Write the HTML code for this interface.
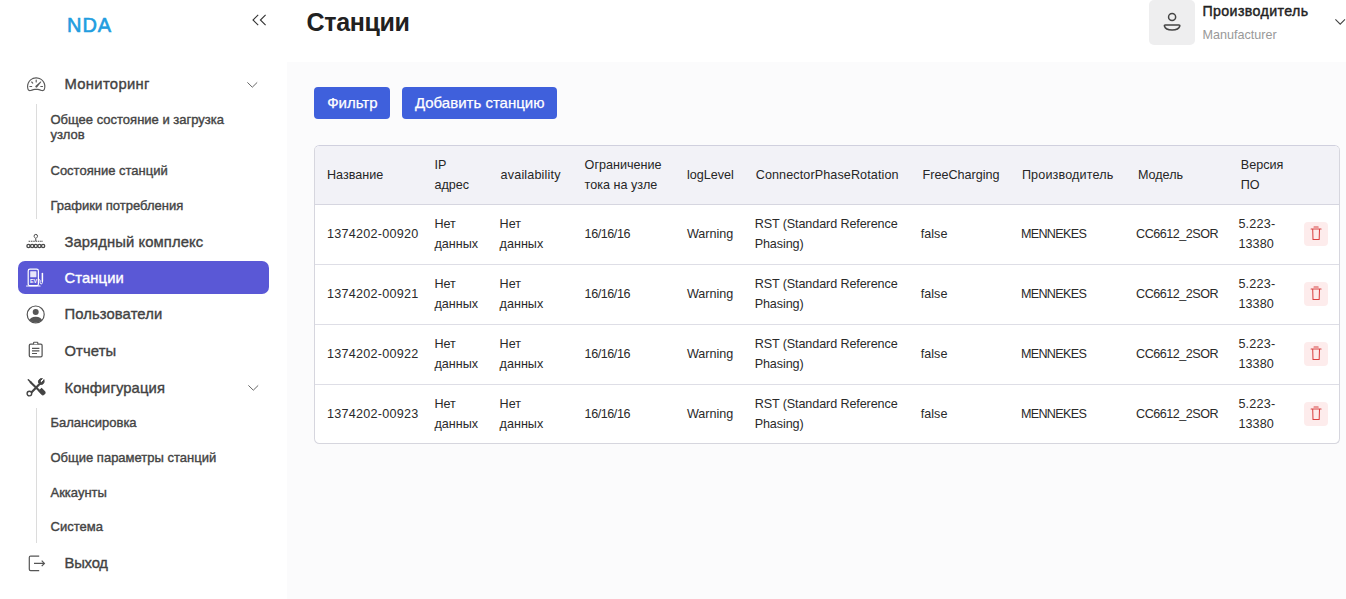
<!DOCTYPE html>
<html lang="ru"><head><meta charset="utf-8"><title>Станции</title>
<style>
*{box-sizing:border-box;margin:0;padding:0}
html,body{width:1346px;height:599px;overflow:hidden;background:#fff;font-family:"Liberation Sans","DejaVu Sans",sans-serif;color:#222}
.abs{position:absolute}
svg{position:absolute;overflow:visible}
#side{position:absolute;left:0;top:0;width:287px;height:599px;background:#fff}
#main{position:absolute;left:287px;top:62px;width:1059px;height:537px;background:#fbfbfc}
.logo{position:absolute;left:67px;top:13.3px;font-size:20px;line-height:24px;color:#229ddf;-webkit-text-stroke:.6px #229ddf;letter-spacing:.95px}
h1{position:absolute;left:306.5px;top:7.4px;letter-spacing:-.32px;font-size:25px;line-height:30px;font-weight:bold;color:#212121}
.mi{position:absolute;left:64.5px;font-size:14.8px;line-height:20px;color:#424242;-webkit-text-stroke:.36px #424242;letter-spacing:.1px;white-space:nowrap}
.sub{position:absolute;left:50.5px;font-size:13px;line-height:15.2px;color:#444;-webkit-text-stroke:.38px #444;width:200px}
.vline{position:absolute;left:36px;width:1px;background:#dcdcdc}
.active{position:absolute;left:18px;top:261px;width:250.5px;height:33px;background:#5a58d6;border-radius:7px}
.btn{position:absolute;top:87px;height:32px;background:#3f60dc;color:#fff;border-radius:4px;font-size:15px;line-height:32px;text-align:center;-webkit-text-stroke:.25px #fff}
.tw{position:absolute;left:314px;top:145px;width:1026px;height:299px;border:1px solid #d6d6de;border-top-color:#d0d0de;border-radius:5.500px;background:#fff;overflow:hidden}
table{width:1024px;table-layout:fixed;border-collapse:separate;border-spacing:0;font-size:12.6px}
th{background:#f2f2f7;font-weight:normal;text-align:left;height:59px;border-bottom:1px solid #d6d6e0;color:#262626;line-height:19.2px;padding:1px 0 0 12px;vertical-align:middle;white-space:nowrap}
td{height:60px;border-bottom:1px solid #dedee6;color:#2a2a2a;line-height:19.2px;padding:0 0 0 12px;vertical-align:middle}
tbody tr:last-child td{border-bottom-color:transparent}
td i,th i{font-style:normal;display:block;position:relative}
.sh0{left:-.6px}.sh1{left:-1px}.sh2{left:-1.8px}.sh3{left:-2.4px}
td.dc{padding:0 0 0 11.5px}
.del{display:block;width:24px;height:24px;background:#fdecec;border-radius:4px;position:relative;top:-1px;left:.3px}
.user{position:absolute;left:1149px;top:0;width:45.5px;height:45px;background:#eeeeef;border-radius:5px}
</style></head><body>
<div id="side">
<div class="logo">NDA</div>
<div class="mi" style="top:74.4px;letter-spacing:.32px">Мониторинг</div>
<div class="vline" style="top:104px;height:115px"></div>
<div class="sub" style="top:112.2px">Общее состояние и загрузка узлов</div>
<div class="sub" style="top:162.9px">Состояние станций</div>
<div class="sub" style="top:197.6px">Графики потребления</div>
<div class="mi" style="top:232px">Зарядный комплекс</div>
<div class="active"></div>
<div class="mi" style="top:267.8px;color:#fff;-webkit-text-stroke-color:#fff">Станции</div>
<div class="mi" style="top:304.3px">Пользователи</div>
<div class="mi" style="top:340.8px">Отчеты</div>
<div class="mi" style="top:377.9px">Конфигурация</div>
<div class="vline" style="top:408px;height:135px"></div>
<div class="sub" style="top:415.1px">Балансировка</div>
<div class="sub" style="top:450px">Общие параметры станций</div>
<div class="sub" style="top:484.5px">Аккаунты</div>
<div class="sub" style="top:519.1px">Система</div>
<div class="mi" style="top:552.5px;letter-spacing:-.2px">Выход</div>
</div>
<h1>Станции</h1>
<div class="user"></div>
<div class="abs" style="left:1202.5px;top:2px;font-size:14.200px;line-height:18px;letter-spacing:.38px;-webkit-text-stroke:.42px #222;color:#222">Производитель</div>
<div class="abs" style="left:1202.5px;top:26.6px;font-size:12.6px;line-height:16px;color:#999">Manufacturer</div>
<div id="main"></div>
<div class="btn" style="left:314.4px;width:76px">Фильтр</div>
<div class="btn" style="left:402.3px;width:154.8px">Добавить станцию</div>
<div class="tw"><table><colgroup><col style="width:108px"><col style="width:65.6px"><col style="width:84px"><col style="width:102.3px"><col style="width:68.8px"><col style="width:166.9px"><col style="width:99.3px"><col style="width:116px"><col style="width:102.9px"><col style="width:63.7px"><col></colgroup><thead><tr><th>Название</th><th><i class="sh0">IP<br>адрес</i></th><th><span style="letter-spacing:.16px">availability</span></th><th>Ограничение<br>тока на узле</th><th>logLevel</th><th><span style="letter-spacing:.1px">ConnectorPhaseRotation</span></th><th>FreeCharging</th><th><span style="letter-spacing:.15px">Производитель</span></th><th>Модель</th><th>Версия<br>ПО</th><th></th></tr></thead><tbody><tr><td><span style="letter-spacing:.26px">1374202-00920</span></td><td><i class="sh0">Нет<br>данных</i></td><td><i class="sh1">Нет<br>данных</i></td><td><span style="letter-spacing:-.45px">16/16/16</span></td><td>Warning</td><td><i class="sh1" style="letter-spacing:-.11px">RST (Standard Reference Phasing)</i></td><td><i class="sh2">false</i></td><td><i class="sh1" style="letter-spacing:-.68px">MENNEKES</i></td><td><i class="sh2" style="letter-spacing:-.5px">CC6612_2SOR</i></td><td><i class="sh3"><span style="letter-spacing:.22px">5.223-</span><br><span style="letter-spacing:.1px">13380</span></i></td><td class="dc"><span class="del"><svg width="24" height="24" viewBox="0 0 24 24"><path d="M10 5h4.200M7.100 7h10M8.700 7.300l.3 10.100h6.200l.3-10.100" fill="none" stroke="#da4343" stroke-width="1.050" stroke-linejoin="round" stroke-linecap="round"/></svg></span></td></tr><tr><td><span style="letter-spacing:.26px">1374202-00921</span></td><td><i class="sh0">Нет<br>данных</i></td><td><i class="sh1">Нет<br>данных</i></td><td><span style="letter-spacing:-.45px">16/16/16</span></td><td>Warning</td><td><i class="sh1" style="letter-spacing:-.11px">RST (Standard Reference Phasing)</i></td><td><i class="sh2">false</i></td><td><i class="sh1" style="letter-spacing:-.68px">MENNEKES</i></td><td><i class="sh2" style="letter-spacing:-.5px">CC6612_2SOR</i></td><td><i class="sh3"><span style="letter-spacing:.22px">5.223-</span><br><span style="letter-spacing:.1px">13380</span></i></td><td class="dc"><span class="del"><svg width="24" height="24" viewBox="0 0 24 24"><path d="M10 5h4.200M7.100 7h10M8.700 7.300l.3 10.100h6.200l.3-10.100" fill="none" stroke="#da4343" stroke-width="1.050" stroke-linejoin="round" stroke-linecap="round"/></svg></span></td></tr><tr><td><span style="letter-spacing:.26px">1374202-00922</span></td><td><i class="sh0">Нет<br>данных</i></td><td><i class="sh1">Нет<br>данных</i></td><td><span style="letter-spacing:-.45px">16/16/16</span></td><td>Warning</td><td><i class="sh1" style="letter-spacing:-.11px">RST (Standard Reference Phasing)</i></td><td><i class="sh2">false</i></td><td><i class="sh1" style="letter-spacing:-.68px">MENNEKES</i></td><td><i class="sh2" style="letter-spacing:-.5px">CC6612_2SOR</i></td><td><i class="sh3"><span style="letter-spacing:.22px">5.223-</span><br><span style="letter-spacing:.1px">13380</span></i></td><td class="dc"><span class="del"><svg width="24" height="24" viewBox="0 0 24 24"><path d="M10 5h4.200M7.100 7h10M8.700 7.300l.3 10.100h6.200l.3-10.100" fill="none" stroke="#da4343" stroke-width="1.050" stroke-linejoin="round" stroke-linecap="round"/></svg></span></td></tr><tr><td><span style="letter-spacing:.26px">1374202-00923</span></td><td><i class="sh0">Нет<br>данных</i></td><td><i class="sh1">Нет<br>данных</i></td><td><span style="letter-spacing:-.45px">16/16/16</span></td><td>Warning</td><td><i class="sh1" style="letter-spacing:-.11px">RST (Standard Reference Phasing)</i></td><td><i class="sh2">false</i></td><td><i class="sh1" style="letter-spacing:-.68px">MENNEKES</i></td><td><i class="sh2" style="letter-spacing:-.5px">CC6612_2SOR</i></td><td><i class="sh3"><span style="letter-spacing:.22px">5.223-</span><br><span style="letter-spacing:.1px">13380</span></i></td><td class="dc"><span class="del"><svg width="24" height="24" viewBox="0 0 24 24"><path d="M10 5h4.200M7.100 7h10M8.700 7.300l.3 10.100h6.200l.3-10.100" fill="none" stroke="#da4343" stroke-width="1.050" stroke-linejoin="round" stroke-linecap="round"/></svg></span></td></tr></tbody></table></div>
<!-- collapse chevrons -->
<svg style="left:252px;top:14px" width="15" height="12" viewBox="0 0 15 12"><path d="M6.2 .8L1 6l5.2 5.2M13.6 .8L8.4 6l5.2 5.2" fill="none" stroke="#333" stroke-width="1.1"/></svg>
<!-- chevrons down -->
<svg style="left:247px;top:82px" width="11" height="6" viewBox="0 0 11 6"><path d="M.4 .4L5.3 5.2L10.2 .4" fill="none" stroke="#666" stroke-width="1"/></svg>
<svg style="left:247.7px;top:385px" width="11" height="6" viewBox="0 0 11 6"><path d="M.4 .4L5.3 5.2L10.2 .4" fill="none" stroke="#666" stroke-width="1"/></svg>
<svg style="left:1335px;top:19.4px" width="11" height="6" viewBox="0 0 11 6"><path d="M.4 .4L5.2 5.2L10 .4" fill="none" stroke="#444" stroke-width="1.1"/></svg>
<!-- header user -->
<svg style="left:1149px;top:0" width="46" height="45" viewBox="0 0 46 45"><circle cx="23.100" cy="17" r="3.550" fill="none" stroke="#444" stroke-width="1.500"/><path d="M16.300 24.900h13.600c.7 0 1 .5.900 1.100c-.7 2.700-3.700 4-7.700 4s-7-1.300-7.700-4c-.1-.6.200-1.100.9-1.100z" fill="none" stroke="#444" stroke-width="1.500"/></svg>
<!-- speedometer -->
<svg style="left:26.500px;top:75px" width="18.400" height="18.400" viewBox="0 0 16 16" fill="#5a5a5a"><path d="M8 4a.5.5 0 0 1 .5.5V6a.5.5 0 0 1-1 0V4.500A.5.5 0 0 1 8 4zM3.732 5.732a.5.5 0 0 1 .707 0l.915.914a.5.5 0 1 1-.708.708l-.914-.915a.5.5 0 0 1 0-.707zM2 10a.5.5 0 0 1 .5-.5h1.586a.5.5 0 0 1 0 1H2.500A.5.5 0 0 1 2 10zm9.500 0a.5.5 0 0 1 .5-.5h1.500a.5.5 0 0 1 0 1H12a.5.5 0 0 1-.5-.5zm.754-4.246a.389.389 0 0 0-.527-.02L7.547 9.310a.91.910 0 1 0 1.302 1.258l3.434-4.297a.389.389 0 0 0-.029-.518z"/><path fill-rule="evenodd" d="M0 10a8 8 0 1 1 15.547 2.661c-.442 1.253-1.845 1.602-2.932 1.250C11.309 13.488 9.475 13 8 13c-1.474 0-3.310.488-4.615.911-1.087.352-2.490.003-2.932-1.250A7.988 7.988 0 0 1 0 10zm8-7a7 7 0 0 0-6.603 9.329c.203.575.923.876 1.680.630C4.397 12.533 6.358 12 8 12s3.604.532 4.923.96c.757.245 1.477-.056 1.680-.630A7 7 0 0 0 8 3z"/></svg>
<!-- complex -->
<svg style="left:26px;top:234px" width="20" height="15" viewBox="0 0 20 15" fill="none" stroke="#4a4a4a"><path d="M9.800 4.600c-1.100-1-1.700-1.600-1.700-2.500a1.700 1.700 0 0 1 3.400 0c0 .9-.6 1.500-1.700 2.500z" stroke-width="1"/><path d="M9.800 4.600v2.400" stroke-width="1"/><path d="M2.600 7.300h14.400" stroke-width="1.100" stroke-dasharray="1.600 .7"/><circle cx="2.500" cy="12" r="1.600" stroke-width="1.350"/><circle cx="6.150" cy="12" r="1.600" stroke-width="1.350"/><circle cx="9.800" cy="12" r="1.600" stroke-width="1.350"/><circle cx="13.450" cy="12" r="1.600" stroke-width="1.350"/><circle cx="17.100" cy="12" r="1.600" stroke-width="1.350"/></svg>
<!-- ev station -->
<svg style="left:26px;top:268px" width="20" height="20" viewBox="0 0 20 20" fill="none" stroke="#fff"><rect x="2.200" y="1.100" width="10.200" height="16.600" rx="1.800" stroke-width="1.200"/><rect x="4.200" y="3.200" width="6.200" height="6" rx=".5" fill="#fff" fill-opacity=".85" stroke="none"/><path d="M.6 18h13.400" stroke-width="1.200" stroke-linecap="round"/><path d="M12.400 11.600h.7c.6 0 1 .4 1 1v2c0 .8.500 1.300 1.150 1.300s1.150-.5 1.150-1.300v-1.600" stroke-width="1"/><path d="M16.400 5.500v7.800" stroke-width="1.500" stroke-linecap="round"/><text x="4" y="15.300" font-family="Liberation Sans, sans-serif" font-size="5.400" font-weight="bold" fill="#fff" stroke="none">EV</text></svg>
<!-- person circle -->
<svg style="left:26px;top:304.500px" width="20" height="20" viewBox="0 0 20 20"><defs><clipPath id="pc"><circle cx="9.700" cy="9.500" r="8.300"/></clipPath></defs><circle cx="9.700" cy="9.500" r="8.500" fill="none" stroke="#555" stroke-width="1.200"/><circle cx="9.700" cy="7" r="3" fill="#555"/><ellipse cx="9.700" cy="16.500" rx="6.600" ry="4.800" fill="#555" clip-path="url(#pc)"/></svg>
<!-- clipboard -->
<svg style="left:27.700px;top:341px" width="16" height="17" viewBox="0 0 16 17" fill="none" stroke="#555"><rect x="1.300" y="3.200" width="12.800" height="12.700" rx="1.300" stroke-width="1.250"/><path d="M5.600 3.200V1.700c0-.3.200-.5.500-.5h3.200c.3 0 .5.200.5.500v1.500" stroke-width="1.100" fill="#fff"/><path d="M4 7.300h7.400M4 9.900h7.400M4 12.500h5" stroke-width="1.150"/></svg>
<!-- tools -->
<svg style="left:26px;top:378px" width="20" height="19" viewBox="0 0 20 19" fill="none" stroke="#444" stroke-linecap="round"><path d="M2.300 1.700l2.700 2.700" stroke-width="1.500"/><path d="M4.600 4.200l10.800 10.600" stroke-width="2.100"/><path d="M13.100 13.100l2.500-2.500l3 3.200c.5.500.5 1.200 0 1.700l-.9.900c-.5.500-1.200.5-1.700 0z" stroke-width="1.300" fill="#444"/><path d="M4.400 15.400L14.300 5.200" stroke-width="2.200"/><circle cx="3.400" cy="15.600" r="2.300" stroke-width="1.400" fill="#fff"/><path d="M17.900 2.100l-2.300 2.300l-1.200-.2l-.3-1.300l2.300-2.300c-2.400-.5-4.600 1.800-3.800 4.200l1.900 1.600c2.300.7 4.400-1.700 3.400-4.300z" stroke-width="1" fill="#444"/></svg>
<!-- exit -->
<svg style="left:28px;top:554.500px" width="18" height="17" viewBox="0 0 18 17" fill="none" stroke="#555" stroke-width="1.200"><path d="M11.200 1.100H2.600c-.8 0-1.300.5-1.300 1.300v11.900c0 .8.500 1.300 1.300 1.300h8.600"/><path d="M6 8.400h10.200M13.700 5.700l2.700 2.700l-2.700 2.700"/></svg>

</body></html>
